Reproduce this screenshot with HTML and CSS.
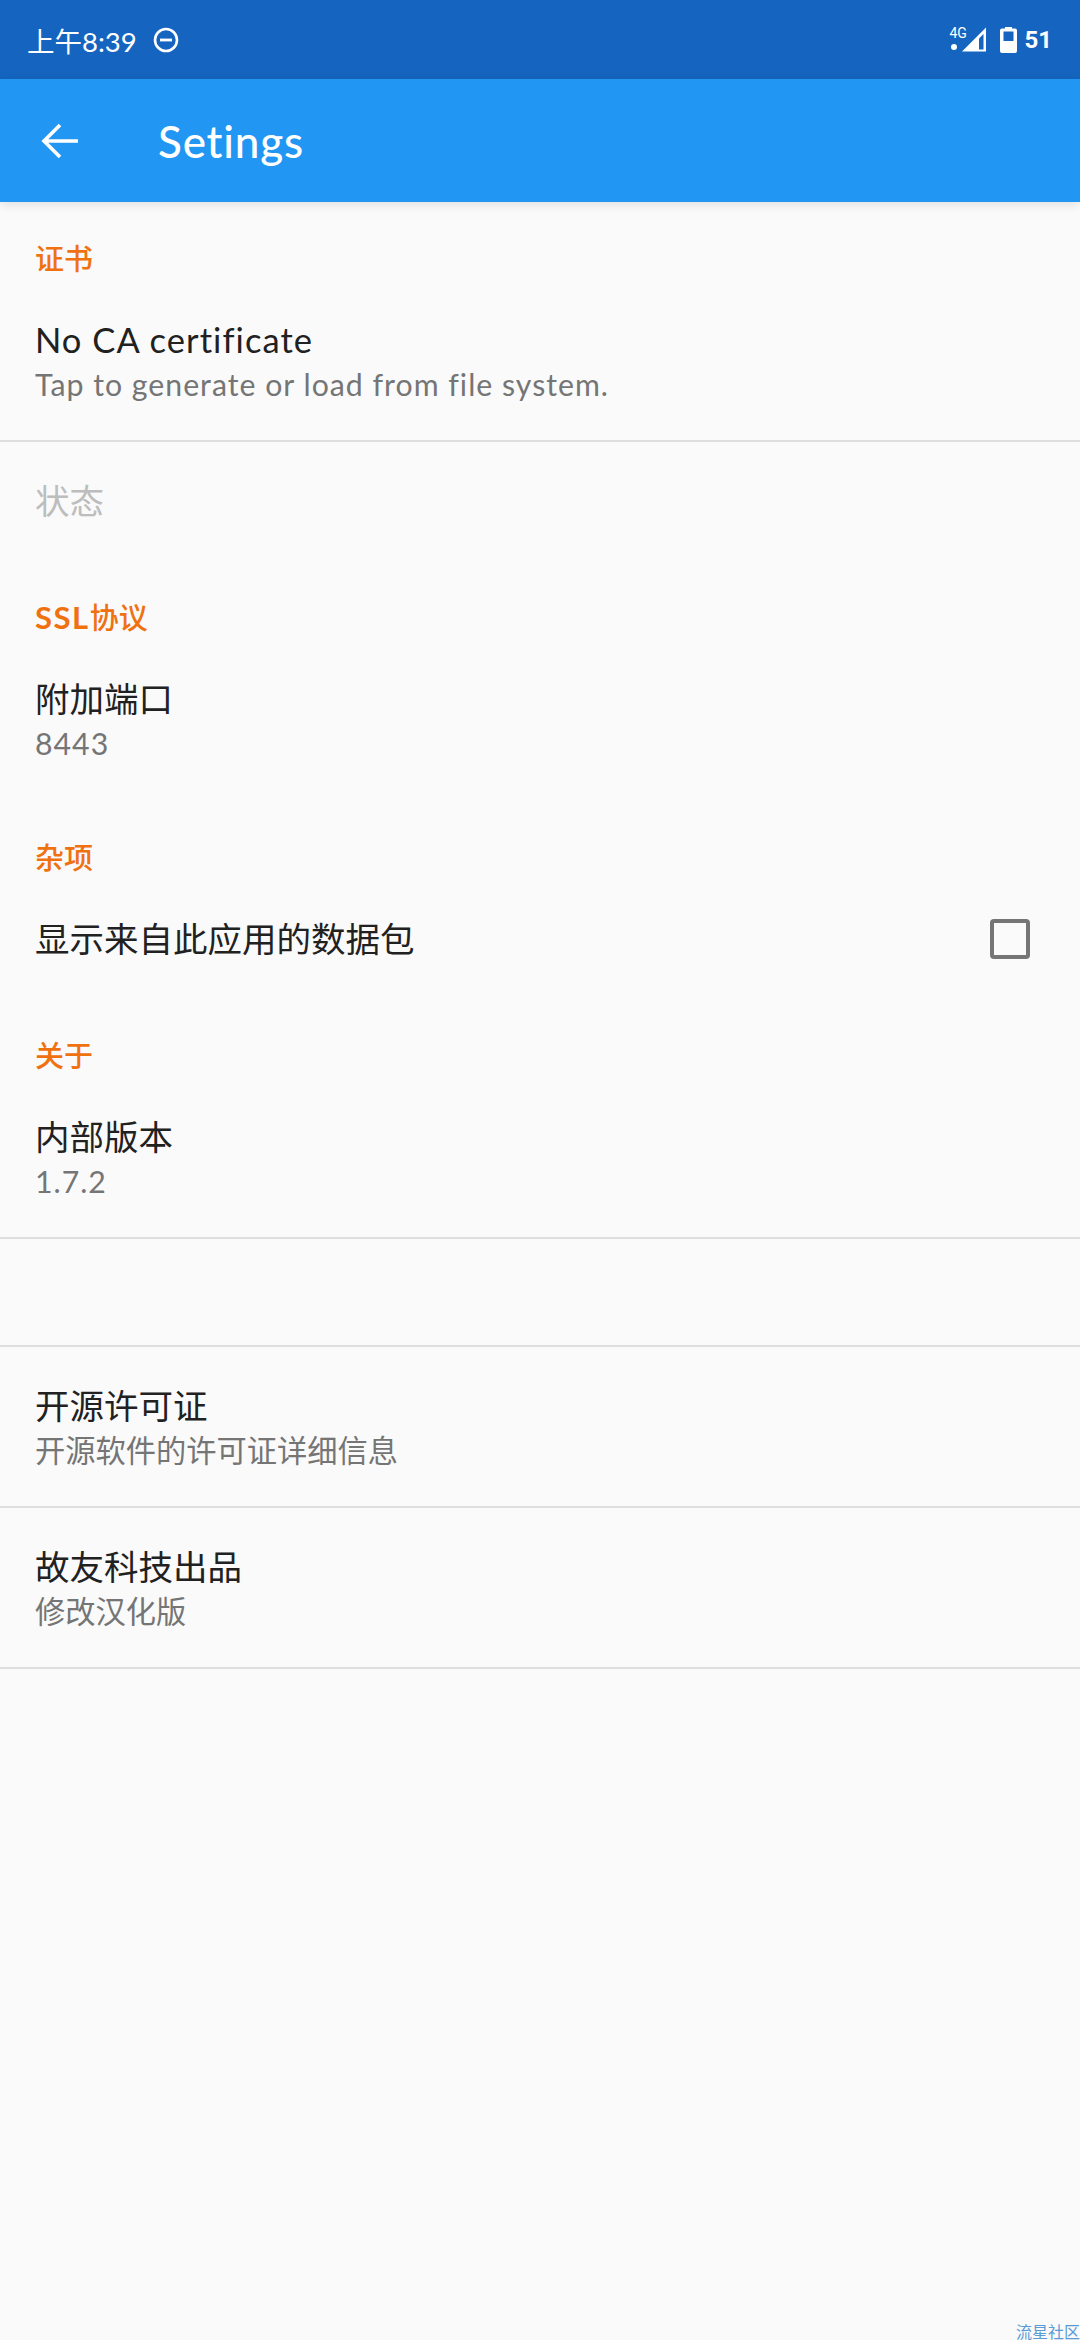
FILE: index.html
```html
<!DOCTYPE html>
<html lang="zh-CN">
<head>
    <meta charset="UTF-8">
    <meta name="viewport" content="width=device-width, initial-scale=1.0">
    <title>Setings</title>
    <link rel="stylesheet" href="styles.css">
</head>
<body>

    <div class="screen">
        <!-- Status bar -->
        <div class="status-bar">
            <div class="status-left">
                <span class="clock">上午8:39</span>
                <svg class="dnd-icon" width="26" height="26" viewBox="0 0 26 26">
                    <circle cx="13" cy="13" r="11" fill="none" stroke="#fff" stroke-width="2.6"/>
                    <rect x="7" y="11.6" width="12" height="2.8" fill="#fff"/>
                </svg>
            </div>
            <div class="status-right">
                <span class="net-wrap">
                    <span class="net-label">4G</span>
                    <span class="net-dot"></span>
                </span>
                <svg class="signal-icon" width="26" height="26" viewBox="0 0 26 26">
                    <path d="M1 24.5 L25 0.5 V24.5 Z" fill="#fff"/>
                    <path d="M18 11.5 L22.5 7 V22.5 H18 Z" fill="#1565c0"/>
                </svg>
                <svg class="battery-icon" width="17" height="26" viewBox="0 0 17 26">
                    <path d="M5 0 H12 V1.5 H15 Q17 1.5 17 3.5 V24 Q17 26 15 26 H2 Q0 26 0 24 V3.5 Q0 1.5 2 1.5 H5 Z" fill="#fff"/>
                    <rect x="3.5" y="4.5" width="10" height="9.5" fill="#1565c0"/>
                </svg>
                <span class="battery-level">51</span>
            </div>
        </div>

        <!-- App bar -->
        <header class="app-bar">
            <svg class="back-icon" width="38" height="36" viewBox="0 0 38 36">
                <path d="M3 18 H37 M19 2 L3 18 L19 34" fill="none" stroke="#fff" stroke-width="3.6"/>
            </svg>
            <h1 class="app-title">Setings</h1>
        </header>

        <!-- Preference list -->
        <main class="prefs">
            <h2 class="category">证书</h2>
            <div class="pref divided">
                <div class="pref-title latin">No CA certificate</div>
                <div class="pref-summary latin">Tap to generate or load from file system.</div>
            </div>

            <div class="pref single">
                <div class="pref-title disabled">状态</div>
            </div>

            <h2 class="category"><span class="latin-head">SSL</span>协议</h2>
            <div class="pref spaced">
                <div class="pref-title">附加端口</div>
                <div class="pref-summary latin">8443</div>
            </div>

            <h2 class="category">杂项</h2>
            <div class="pref check-row">
                <div class="pref-title">显示来自此应用的数据包</div>
                <span class="checkbox"></span>
            </div>

            <h2 class="category">关于</h2>
            <div class="pref divided">
                <div class="pref-title">内部版本</div>
                <div class="pref-summary latin">1.7.2</div>
            </div>

            <div class="pref-blank divided"></div>

            <div class="pref link-row divided">
                <div class="pref-title">开源许可证</div>
                <div class="pref-summary">开源软件的许可证详细信息</div>
            </div>

            <div class="pref link-row divided">
                <div class="pref-title">故友科技出品</div>
                <div class="pref-summary">修改汉化版</div>
            </div>
        </main>

        <div class="watermark">流星社区</div>
    </div>

</body>
</html>
```

FILE: styles.css
```css
body {
    margin: 0;
    padding: 0;
    background-color: #fafafa;
    font-family: 'Lato', 'Noto Sans CJK SC', sans-serif;
}

.screen {
    position: relative;
    height: 2340px;
    overflow: hidden;
}

/* Status bar */
.status-bar {
    height: 79px;
    box-sizing: border-box;
    padding: 0 28px 0 27px;
    display: flex;
    align-items: center;
    justify-content: space-between;
    background-color: #1565c0;
    color: #fff;
}

.status-left,
.status-right {
    display: flex;
    align-items: center;
}

.clock {
    font-size: 27.5px;
}

.dnd-icon {
    margin-left: 16px;
}

.net-wrap {
    display: flex;
    flex-direction: column;
    align-items: flex-start;
    width: 22px;
    margin: 0 -10px 4px 0;
}

.net-label {
    font-family: 'Roboto', sans-serif;
    font-size: 14px;
    line-height: 15px;
}

.net-dot {
    width: 6px;
    height: 6px;
    margin: 3px 0 0 2px;
    border-radius: 50%;
    background-color: #fff;
}

.battery-icon {
    margin-left: 13px;
}

.battery-level {
    margin-left: 7px;
    font-family: 'Roboto', sans-serif;
    font-size: 24px;
    font-weight: 700;
}

/* App bar */
.app-bar {
    position: relative;
    height: 123px;
    display: flex;
    align-items: center;
    padding-left: 41px;
    background-color: #2196f3;
    box-shadow: 0 2px 10px rgba(0, 0, 0, 0.12);
}

.app-title {
    margin: 0 0 0 79px;
    color: #fff;
    font-size: 44px;
    font-weight: 500;
    letter-spacing: 0.8px;
}

/* Preference rows */
.category {
    margin: 0;
    padding: 37px 35px 8px;
    color: #ef7110;
    font-size: 29px;
    line-height: 40px;
    font-weight: 500;
}

.latin-head {
    font-size: 31px;
    line-height: 30px;
    font-weight: 700;
    letter-spacing: 1.5px;
}

.pref {
    padding: 31px 35px 34px;
}

.pref.spaced {
    padding-bottom: 36px;
}

.divided {
    border-bottom: 2px solid #dedede;
}

.pref-title {
    color: #212121;
    font-size: 34.5px;
    line-height: 44px;
}

.pref-title.disabled {
    color: #bdbdbd;
}

.pref-summary {
    color: #757575;
    font-size: 30.25px;
    line-height: 44px;
}

.pref-title.latin {
    letter-spacing: 1.05px;
}

.pref-summary.latin {
    letter-spacing: 1px;
}

.pref.single {
    padding: 37px 35px 38px;
}

.pref.link-row {
    padding: 37px 35px 34px;
}

.pref-blank {
    height: 106px;
}

.pref.check-row {
    display: flex;
    align-items: center;
    justify-content: space-between;
    padding: 31px 50px 38px 35px;
}

.checkbox {
    width: 32px;
    height: 32px;
    border: 4px solid #757575;
    border-radius: 4px;
}

.watermark {
    position: absolute;
    right: 0;
    bottom: 0;
    color: #5b9bd5;
    font-size: 16px;
    line-height: 16px;
    white-space: nowrap;
}
```
